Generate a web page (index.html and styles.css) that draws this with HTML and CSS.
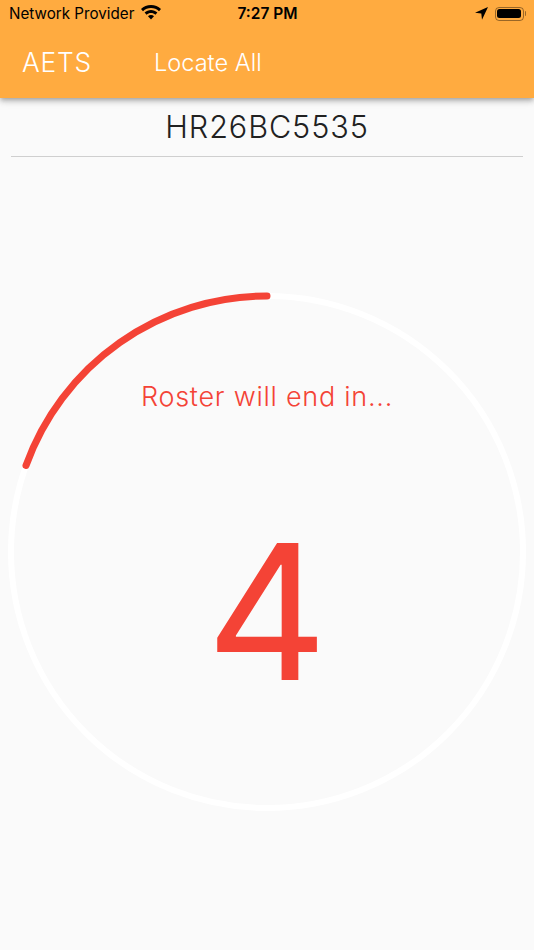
FILE: index.html
```html
<!DOCTYPE html>
<html lang="en">
<head>
<meta charset="utf-8">
<title>AETS</title>
<link rel="stylesheet" href="styles.css">
</head>
<body>
<header class="appbar">
  <div class="status">
    <div class="status-left">
      <span>Network Provider</span>
      <svg class="wifi" width="20" height="15" viewBox="0 0 20 15"><path d="M10 0C6.100 0 2.700 1.500 0 4l2 2.200C4.200 4.200 7 3 10 3s5.800 1.200 8 3.200L20 4c-2.700-2.500-6.100-4-10-4z"/><path d="M10 5C7.600 5 5.400 6 3.600 7.500l2 2.200C6.800 8.700 8.300 8 10 8s3.200.7 4.400 1.700l2-2.200C14.600 6 12.400 5 10 5z"/><path d="M10 10c-1.200 0-2.200.4-3 1.200l3 3.300 3-3.300c-.8-.8-1.800-1.200-3-1.200z"/></svg>
    </div>
    <span class="clock">7:27 PM</span>
    <div class="status-right">
      <svg class="arrow" width="13" height="13" viewBox="0 0 13 13"><path d="M13 0L0 5.800l6.300.7.700 6.300z"/></svg>
      <div class="battery"><div class="battery-fill"></div></div>
      <div class="battery-cap"></div>
    </div>
  </div>
  <nav class="toolbar">
    <span class="brand">AETS</span>
    <span class="action">Locate All</span>
  </nav>
</header>
<main class="content">
  <h1 class="plate">HR26BC5535</h1>
  <hr class="divider">
  <section class="timer">
    <svg class="ring" width="522" height="522" viewBox="0 0 522 522">
      <circle class="ring-track" cx="261" cy="261" r="256"/>
      <path class="ring-progress" d="M261 5A256 256 0 0 0 20 174.500"/>
    </svg>
    <div class="timer-text">
      <p class="timer-label">Roster will end in...</p>
      <p class="timer-count">4</p>
    </div>
  </section>
</main>
</body>
</html>
```
FILE: styles.css
```css
* { box-sizing: border-box; }
html, body { margin: 0; padding: 0; }
body {
  width: 534px;
  height: 950px;
  overflow: hidden;
  background: #fafafa;
  font-family: Inter, "Liberation Sans", sans-serif;
}
.appbar {
  height: 98px;
  background: #ffab40;
  box-shadow: 0 2px 4px -1px rgba(0,0,0,.2), 0 4px 5px rgba(0,0,0,.14), 0 1px 10px rgba(0,0,0,.12);
  position: relative;
}
.status {
  height: 27px;
  display: grid;
  grid-template-columns: 1fr auto 1fr;
  align-items: center;
  padding: 0 8px 0 9px;
  color: #000;
  font-size: 15.200px;
}
.status-left { display: flex; align-items: center; gap: 7px; }
.wifi { margin-top: -2px; }
.clock { font-weight: 600; font-size: 15.500px; }
.status-right { display: flex; justify-content: flex-end; align-items: center; }
.arrow { margin-right: 7px; }
.battery {
  width: 29px;
  height: 14px;
  border: 1px solid rgba(0,0,0,.4);
  border-radius: 4px;
  padding: 1.500px;
}
.battery-fill { height: 100%; background: #000; border-radius: 2.500px; }
.battery-cap { width: 1.500px; height: 5px; margin-left: 1px; background: rgba(0,0,0,.4); border-radius: 0 2px 2px 0; }
.toolbar {
  height: 71px;
  display: flex;
  align-items: center;
  color: #fff;
  padding: 0 0 0 22px;
}
.brand { font-size: 26.300px; letter-spacing: .8px; font-weight: 350; }
.action { font-size: 23.600px; font-weight: 300; margin-left: 62px; }
.content { display: flex; flex-direction: column; }
.plate {
  margin: 0;
  height: 58px;
  line-height: 58px;
  text-align: center;
  font-size: 30.600px;
  font-weight: 350;
  letter-spacing: .9px;
  color: #212121;
}
.divider {
  margin: 0 11px;
  border: 0;
  height: 1px;
  background: #cfcfcf;
}
.timer {
  position: relative;
  margin: 134px 0 0 6px;
  width: 522px;
  height: 522px;
}
.ring { display: block; }
.ring-track { fill: none; stroke: #fff; stroke-width: 6; }
.ring-progress { fill: none; stroke: #f44336; stroke-width: 7; stroke-linecap: round; }
.timer-text {
  position: absolute;
  inset: 0;
  text-align: center;
  color: #f44336;
}
.timer-label { margin: 90px 0 0; font-size: 27px; line-height: 32px; font-weight: 320; letter-spacing: .75px; }
.timer-count { margin: 85px 0 0; font-size: 188px; line-height: 228px; font-weight: 370; }
```
